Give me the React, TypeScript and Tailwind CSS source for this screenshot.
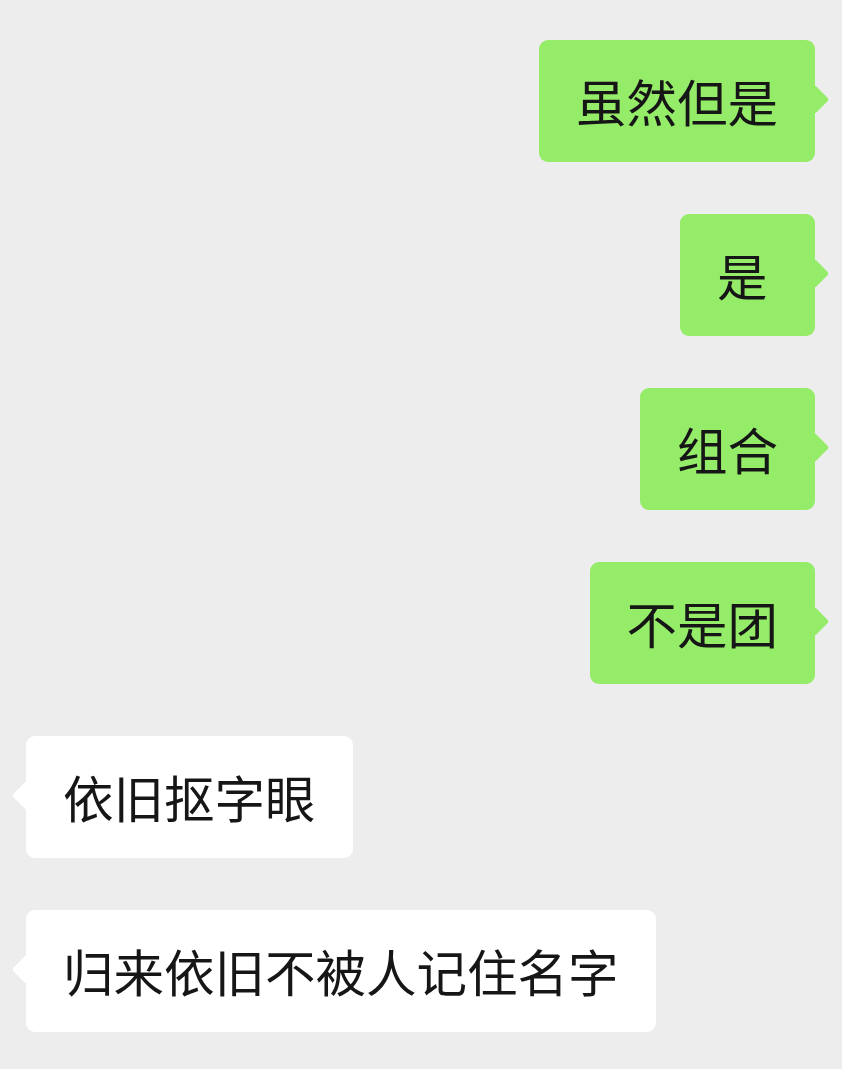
import React from "react";

type Msg = { text: string; mine: boolean; minW?: boolean };

const messages: Msg[] = [
  { text: "虽然但是", mine: true },
  { text: "是", mine: true, minW: true },
  { text: "组合", mine: true },
  { text: "不是团", mine: true },
  { text: "依旧抠字眼", mine: false },
  { text: "归来依旧不被人记住名字", mine: false },
];

function Bubble({ msg }: { msg: Msg }) {
  const color = msg.mine ? "bg-[#95ec69]" : "bg-white";
  return (
    <div className={msg.mine ? "flex justify-end" : "flex justify-start"}>
      <div
        className={`relative h-[122px] flex items-center rounded-[9px] pl-[37px] pr-[37px] ${color} ${
          msg.minW ? "min-w-[135px]" : ""
        }`}
      >
        {/* tail */}
        <div
          className={`absolute top-[49px] w-[21px] h-[21px] rotate-45 rounded-[3px] ${color} ${
            msg.mine ? "right-[-10px]" : "left-[-10px]"
          }`}
        />
        <span className="relative -mt-[2px] text-[50.5px] leading-[70px] text-[#161616] whitespace-nowrap">
          {msg.text}
        </span>
      </div>
    </div>
  );
}

export default function App() {
  return (
    <div
      className="min-h-[1069px] w-[842px] bg-[#ededed] pt-[40px] pl-[26px] pr-[27px] flex flex-col gap-[52px]"
      style={{ fontFamily: '"Noto Sans CJK SC", "Noto Sans", sans-serif' }}
    >
      {messages.map((m, i) => (
        <Bubble key={i} msg={m} />
      ))}
    </div>
  );
}
